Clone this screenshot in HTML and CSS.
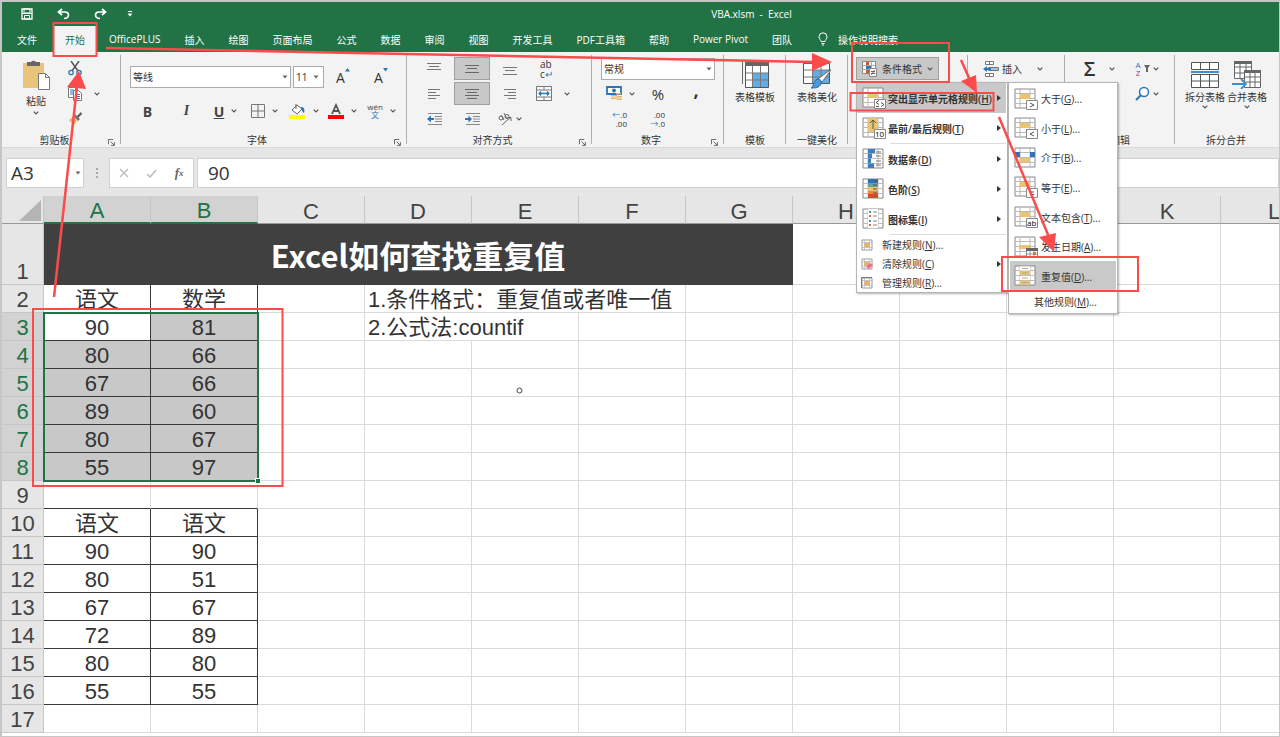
FILE: index.html
```html
<!DOCTYPE html>
<html lang="zh-CN">
<head>
    <meta charset="UTF-8">
    <meta name="viewport" content="width=device-width, initial-scale=1.0">
    <title>VBA.xlsm - Excel</title>
    <link rel="stylesheet" href="styles.css">
</head>
<body>
    <!-- shared icons -->
    <svg class="defs" aria-hidden="true">
        <symbol id="chev" viewBox="0 0 6 4"><path d="M.7.7 3 3 5.3.7" fill="none" stroke="#555" stroke-width="1.2"/></symbol>
        <symbol id="tri" viewBox="0 0 6 4"><path d="M.5.5h5L3 3.5z" fill="#666"/></symbol>
        <symbol id="launch" viewBox="0 0 8 8"><path d="M.5 6V.5H6M3 3l4 4M7.300 3.500v3.800H3.500" fill="none" stroke="#555"/></symbol>
        <symbol id="cells" viewBox="0 0 24 22"><path d="M1 1h20v19H1z" fill="#fff" stroke="#888"/><path d="M1 5.500h20M1 10.500h20M1 15.500h20M6 1v19M16 1v19" stroke="#bbb" fill="none"/></symbol>
        <symbol id="mark" viewBox="0 0 24 22"><use href="#cells"/><path d="M6 6h10v5H6z" fill="#eac46f"/></symbol>
        <symbol id="badge" viewBox="0 0 24 22"><path d="M12.500 12.500h11v9h-11z" fill="#fff" stroke="#888"/></symbol>
        <symbol id="small" viewBox="0 0 12 12"><path d="M1 1h10v10H1z" fill="#fff" stroke="#999"/><path d="M1 3.500h10M1 8.500h10M3.500 1v10M8.500 1v10" stroke="#c4c4c4"/><path d="M3.500 4h5v4h-5z" fill="#eab45f"/></symbol>
    </svg>

    <div class="window">
        <header class="top">
            <div class="titlebar">
                <div class="quick">
                    <button aria-label="保存"><svg width="12" height="12" viewBox="0 0 12 12"><path d="M1 1h10v10H1z" fill="none" stroke="#fff" stroke-width="1.300"/><path d="M3 1h6v4H3zM3.500 7.500h5V11h-5z" fill="none" stroke="#fff"/><path d="M1 5.500h10" stroke="#fff"/></svg></button>
                    <button aria-label="撤消"><svg width="13" height="12" viewBox="0 0 13 12"><path d="M5 1 1.500 4 5 7M2 4h6c2.500 0 3.500 1.500 3.500 3S10 10.500 7 10.500" fill="none" stroke="#fff" stroke-width="1.700"/></svg></button>
                    <button aria-label="恢复"><svg width="13" height="12" viewBox="0 0 13 12"><path d="m8 1 3.500 3L8 7M11 4H5C2.500 4 1.500 5.500 1.500 7S3 10.500 6 10.500" fill="none" stroke="#fff" stroke-width="1.700"/></svg></button>
                    <button class="more" aria-label="自定义"><svg width="6" height="6" viewBox="0 0 6 6"><path d="M1 .5h4" stroke="#fff"/><path d="M.5 2.500h5L3 5.500z" fill="#fff"/></svg></button>
                </div>
                <div class="doc-name">VBA.xlsm&nbsp; -&nbsp; Excel</div>
            </div>
            <nav class="tabs">
                <a href="#" class="file">文件</a>
                <a href="#" class="active">开始</a>
                <a href="#">OfficePLUS</a>
                <a href="#">插入</a>
                <a href="#">绘图</a>
                <a href="#">页面布局</a>
                <a href="#">公式</a>
                <a href="#">数据</a>
                <a href="#">审阅</a>
                <a href="#">视图</a>
                <a href="#">开发工具</a>
                <a href="#">PDF工具箱</a>
                <a href="#">帮助</a>
                <a href="#">Power Pivot</a>
                <a href="#">团队</a>
                <a href="#" class="tell"><svg width="10" height="14" viewBox="0 0 10 14"><path d="M3 9.500C3 8 1 7 1 4.800a4 4 0 0 1 8 0C9 7 7 8 7 9.500zM3.500 11.500h3M4 13h2" fill="none" stroke="#fff"/></svg>操作说明搜索</a>
            </nav>
        </header>

        <section class="ribbon">
            <div class="group clipboard">
                <div class="group-body">
                    <button class="big paste">
                        <svg width="28" height="32" viewBox="0 0 28 32"><path d="M1 4h21v25H1z" fill="#e9c37c"/><path d="M5 3h4a3 3 0 0 1 5 0h4v4H5z" fill="#666"/><path d="M16.500 14.500h7l4 4v12h-11z" fill="#fff" stroke="#777"/><path d="M23.500 14.500v4h4" fill="none" stroke="#777"/></svg>
                        <span>粘贴</span>
                        <svg class="chev"><use href="#chev"/></svg>
                    </button>
                    <div class="rows">
                        <button aria-label="剪切"><svg width="14" height="15" viewBox="0 0 14 15"><path d="M3 0l7 10M11 0 4 10" stroke="#555" stroke-width="1.500"/><circle cx="3" cy="11.500" r="2.200" fill="none" stroke="#2f75b5" stroke-width="1.300"/><circle cx="11" cy="11.500" r="2.200" fill="none" stroke="#2f75b5" stroke-width="1.300"/></svg></button>
                        <button class="drop" aria-label="复制"><svg width="14" height="14" viewBox="0 0 14 14"><path d="M.5.5h7v10h-7z" fill="#fff" stroke="#777"/><path d="M2 3h4M2 5h4M2 7h4" stroke="#2f75b5"/><path d="M5.500 3.500h5l3 3v7h-8z" fill="#fff" stroke="#777"/><path d="M7 7.500h5M7 9.500h5M7 11.500h5" stroke="#2f75b5"/></svg><svg class="chev"><use href="#chev"/></svg></button>
                        <button aria-label="格式刷"><svg width="14" height="13" viewBox="0 0 14 13"><path d="M1 8l4-3 4 4-3 4z" fill="#e9b55c"/><path d="m5 4 2-2 5 5-2 2z" fill="#777"/><path d="m9 4 4-4 1 2-4 4z" fill="#555"/></svg></button>
                    </div>
                </div>
                <div class="group-label">剪贴板<svg class="launch"><use href="#launch"/></svg></div>
            </div>

            <div class="group font">
                <div class="group-body">
                    <div class="font-row">
                        <div class="combo"><select class="font-name" aria-label="字体"><option>等线</option></select><svg class="chev"><use href="#tri"/></svg></div>
                        <div class="combo"><select class="font-size" aria-label="字号"><option>11</option></select><svg class="chev"><use href="#tri"/></svg></div>
                        <button class="cell" aria-label="增大字号"><span class="glyph">A</span><svg class="tip" width="5" height="4" viewBox="0 0 5 4"><path d="M0 3.500 2.500 0 5 3.500z" fill="#2f75b5"/></svg></button>
                        <button class="cell" aria-label="减小字号"><span class="glyph">A</span><svg class="tip" width="5" height="4" viewBox="0 0 5 4"><path d="M0 0h5L2.500 3.500z" fill="#2f75b5"/></svg></button>
                    </div>
                    <div class="font-row style-row">
                        <button class="cell"><b>B</b></button>
                        <button class="cell"><i>I</i></button>
                        <button class="cell drop"><u>U</u><svg class="chev"><use href="#chev"/></svg></button>
                        <button class="cell drop" aria-label="边框"><svg width="14" height="14" viewBox="0 0 14 14"><path d="M.5.5h13v13H.5zM7 .5v13M.5 7h13" fill="none" stroke="#777"/></svg><svg class="chev"><use href="#chev"/></svg></button>
                        <button class="cell drop" aria-label="填充颜色"><svg width="17" height="16" viewBox="0 0 17 16"><path d="m8 2 5 4-5 5-5-4z" fill="#fff" stroke="#666"/><path d="M7 6V1" stroke="#666"/><path d="M12 4c3 0 4 2 3 6-2-1-2-3-3-6z" fill="#2f75b5"/><path d="M0 12h16v4H0z" fill="#ff0"/></svg><svg class="chev"><use href="#chev"/></svg></button>
                        <button class="cell drop" aria-label="字体颜色"><svg width="16" height="16" viewBox="0 0 16 16"><path d="m4 11 4-9 4 9M5.500 8h5" fill="none" stroke="#555" stroke-width="1.800"/><path d="M0 12h16v4H0z" fill="#f00"/></svg><svg class="chev"><use href="#chev"/></svg></button>
                        <button class="cell drop"><span class="pinyin">wén<em>文</em></span><svg class="chev"><use href="#chev"/></svg></button>
                    </div>
                </div>
                <div class="group-label">字体<svg class="launch"><use href="#launch"/></svg></div>
            </div>

            <div class="group align">
                <div class="group-body icon-grid">
                    <button aria-label="顶端对齐"><svg width="14" height="12" viewBox="0 0 14 12"><path d="M0 .5h14M2 3.500h10M0 6.500h14" stroke="#777"/></svg></button>
                    <button class="on" aria-label="垂直居中"><svg width="14" height="10" viewBox="0 0 14 10"><path d="M0 1.500h14M2 4.500h10M0 8.500h14" stroke="#666"/></svg></button>
                    <button aria-label="底端对齐"><svg width="14" height="12" viewBox="0 0 14 12"><path d="M0 4.500h14M2 7.500h10M0 11.500h14" stroke="#777"/></svg></button>
                    <button class="drop" aria-label="自动换行"><span class="wrap-text"><span>ab</span><span>c<em>↵</em></span></span></button>
                    <button aria-label="左对齐"><svg width="12" height="10" viewBox="0 0 12 10"><path d="M0 .5h12M0 3.500h8M0 6.500h12M0 9.500h8" stroke="#777"/></svg></button>
                    <button class="on" aria-label="居中"><svg width="14" height="10" viewBox="0 0 14 10"><path d="M0 .5h14M2 3.500h10M0 6.500h14M2 9.500h10" stroke="#666"/></svg></button>
                    <button aria-label="右对齐"><svg width="12" height="10" viewBox="0 0 12 10"><path d="M0 .5h12M4 3.500h8M0 6.500h12M4 9.500h8" stroke="#777"/></svg></button>
                    <button class="drop" aria-label="合并后居中"><svg width="16" height="15" viewBox="0 0 16 15"><path d="M.5.500h15v14H.5z" fill="#fff" stroke="#777"/><path d="M.5 4h15M.5 11h15M8 .5V4M8 11v3.500" fill="none" stroke="#777"/><path d="M3 7.500h10M5 5.500l-2 2 2 2M11 5.500l2 2-2 2" fill="none" stroke="#2f75b5" stroke-width="1.300"/></svg><svg class="chev far"><use href="#chev"/></svg></button>
                    <button aria-label="减少缩进"><svg width="15" height="12" viewBox="0 0 15 12"><path d="M1 .5h14M8 3.500h7M8 6h7M8 8.500h7M1 11.500h14" stroke="#888"/><path d="M0 6l4-3.500V5h3v2H4v2.500z" fill="#2f75b5"/></svg></button>
                    <button aria-label="增加缩进"><svg width="15" height="12" viewBox="0 0 15 12"><path d="M1 .5h14M8 3.500h7M8 6h7M8 8.500h7M1 11.500h14" stroke="#888"/><path d="M7 6 3.500 2.500V5H0v2h3.500v2.500z" fill="#2f75b5"/></svg></button>
                    <button class="drop orient" aria-label="方向"><svg width="15" height="14" viewBox="0 0 15 14"><circle cx="3" cy="6" r="2" fill="none" stroke="#666"/><path d="m3 3 3 5M6 1l3 6" stroke="#666"/><circle cx="9" cy="4.500" r="2" fill="none" stroke="#666"/><path d="m4 13 9-8M9.500 5.500H13V9" fill="none" stroke="#666"/></svg><svg class="chev"><use href="#chev"/></svg></button>
                </div>
                <div class="group-label">对齐方式<svg class="launch"><use href="#launch"/></svg></div>
            </div>

            <div class="group number">
                <div class="group-body icon-grid">
                    <div class="combo"><select class="format" aria-label="数字格式"><option>常规</option></select><svg class="chev"><use href="#tri"/></svg></div>
                    <button class="drop" aria-label="会计数字格式"><svg width="16" height="15" viewBox="0 0 16 15"><path d="M1 1h14v7H1z" fill="#fff" stroke="#2f75b5" stroke-width="1.800"/><circle cx="8" cy="4.500" r="2" fill="#2f75b5"/><path d="M5 9h6v1.500H5zM5 11.500h6V13H5zM10 7h5v1.500h-5zM11 10h5v1.500h-5zM11 12.500h5V14h-5z" fill="#e9b55c"/></svg><svg class="chev"><use href="#chev"/></svg></button>
                    <button class="pct">%</button>
                    <button class="comma">,</button>
                    <button class="decimals"><span><em>←</em>.0</span><span>.00</span></button>
                    <button class="decimals"><span>.00</span><span><em>→</em>.0</span></button>
                </div>
                <div class="group-label">数字<svg class="launch"><use href="#launch"/></svg></div>
            </div>

            <div class="group plus">
                <div class="group-body">
                    <button class="big">
                        <svg width="28" height="28" viewBox="0 0 28 28"><path d="M1.500 1v22" stroke="#666"/><path d="M4.500 1.500h23v25h-23z" fill="#fff" stroke="#555"/><path d="M4 1h24v4H4z" fill="#666"/><path d="M12 12h15v14H12z" fill="#62ace6"/><path d="M5 12h22M5 19h22M11.500 5v21M19.500 5v21" stroke="#777" fill="none"/></svg>
                        <span>表格模板</span>
                    </button>
                </div>
                <div class="group-label">模板</div>
            </div>

            <div class="group plus">
                <div class="group-body">
                    <button class="big">
                        <svg width="28" height="28" viewBox="0 0 28 28"><path d="M.5 1.500h26v21H.5z" fill="#fff" stroke="#555"/><path d="M0 0h27v3H0z" fill="#666"/><path d="M10 9h16v13H10z" fill="#62ace6"/><path d="M1 9h25M1 16h25M9.500 3v19M18 3v19" stroke="#777" fill="none"/><path d="m28 9-9 12-4-3 12-9z" fill="#fff" stroke="#666"/><path d="M14 18c3 0 5 2 4 5-2 4-6 4-10 4 3-2 2-6 6-9z" fill="#4a98dc" stroke="#276ca8"/></svg>
                        <span>表格美化</span>
                    </button>
                </div>
                <div class="group-label">一键美化</div>
            </div>

            <div class="group styles">
                <div class="group-body">
                    <div class="dropdown">
                        <button class="cond">
                            <svg width="15" height="16" viewBox="0 0 15 16"><path d="M.5.500h13v12H.5z" fill="#fff" stroke="#888"/><path d="M.5 4.500h13M.5 8.500h13M9.500.5v12" stroke="#aaa"/><path d="M4 1h3v3H4zM4 9h5v3H4z" fill="#d9562b"/><path d="M4 5h5v3H4z" fill="#2f75b5"/><path d="M7.500 7.500h7v8h-7z" fill="#fff" stroke="#888"/><path d="M9 10.500h4M9 12.500h4M12.500 9l-3 5" stroke="#666"/></svg>
                            条件格式
                            <svg class="chev"><use href="#chev"/></svg>
                        </button>
                        <div class="menu main-menu">
                            <button class="item strong hover"><svg class="ico"><use href="#mark"/><use href="#badge"/><path d="m17 13.500-3 2 3 2M14 19.500h3M19 15.500l3 2-3 2" fill="none" stroke="#555"/></svg><span>突出显示单元格规则(<u>H</u>)</span><i class="arrow"></i></button>
                            <button class="item strong"><svg class="ico"><use href="#cells"/><path d="M6 1h10v14H6z" fill="#eac46f"/><path d="M11 12V3M8 6l3-3 3 3" fill="none" stroke="#555"/><use href="#badge"/><text x="13" y="20">10</text></svg><span>最前/最后规则(<u>T</u>)</span><i class="arrow"></i></button>
                            <hr>
                            <button class="item strong"><svg class="ico"><use href="#cells"/><path d="M6 1h7v4H6zM6 5.500h4v4.500H6zM6 10.500h3V15H6zM6 15.500h6V20H6z" fill="#3c7fc0"/><path d="M14 4h5M14 8h5M14 13h5M14 17h5" stroke="#777"/></svg><span>数据条(<u>D</u>)</span><i class="arrow"></i></button>
                            <button class="item strong"><svg class="ico"><use href="#cells"/><path d="M6 1h10v4H6z" fill="#2f75b5"/><path d="M6 5h10v4H6z" fill="#5fa59b"/><path d="M6 9h10v4H6z" fill="#eac46f"/><path d="M6 13h10v3H6z" fill="#e98b3e"/><path d="M6 16h10v4H6z" fill="#cf4f2c"/><path d="M11 3h4M11 7h4M11 11h4M11 15h4" stroke="#555"/></svg><span>色阶(<u>S</u>)</span><i class="arrow"></i></button>
                            <button class="item strong"><svg class="ico"><use href="#cells"/><path d="M6 1h10v19H6z" fill="#fff"/><path d="M7 3h2v2H7zM7 12h2v2H7z" fill="#35a08a"/><path d="M7 7h2v2H7zM7 16h2v2H7z" fill="#e36b3a"/><path d="M11 4h4M11 8h4M11 13h4M11 17h4" stroke="#888"/></svg><span>图标集(<u>I</u>)</span><i class="arrow"></i></button>
                            <hr>
                            <button class="item slim"><svg class="ico-s"><use href="#small"/></svg><span>新建规则(<u>N</u>)...</span></button>
                            <button class="item slim"><svg class="ico-s"><use href="#small"/><path d="m5 9 4-4 3 2-4 4z" fill="#e8718d"/></svg><span>清除规则(<u>C</u>)</span><i class="arrow"></i></button>
                            <button class="item slim"><svg class="ico-s"><use href="#small"/><path d="M.5 11V.5H11" fill="none" stroke="#777"/></svg><span>管理规则(<u>R</u>)...</span></button>

                            <div class="menu sub-menu">
                                <div class="rules">
                                    <button class="item"><svg class="ico"><use href="#mark"/><use href="#badge"/><path d="m16 15 4 2-4 2" fill="none" stroke="#555"/></svg><span>大于(<u>G</u>)...</span></button>
                                    <button class="item"><svg class="ico"><use href="#mark"/><use href="#badge"/><path d="m20 15-4 2 4 2" fill="none" stroke="#555"/></svg><span>小于(<u>L</u>)...</span></button>
                                    <button class="item"><svg class="ico"><use href="#cells"/><path d="M1 5h5v5H1zM16 5h5v5h-5z" fill="#2f75b5"/><path d="M6 11h10v4H6z" fill="#eac46f"/></svg><span>介于(<u>B</u>)...</span></button>
                                    <button class="item"><svg class="ico"><use href="#mark"/><use href="#badge"/><path d="M16 16h4M16 18.500h4" stroke="#555"/></svg><span>等于(<u>E</u>)...</span></button>
                                    <button class="item"><svg class="ico"><use href="#mark"/><use href="#badge"/><text x="13" y="20">ab</text></svg><span>文本包含(<u>T</u>)...</span></button>
                                    <button class="item"><svg class="ico"><use href="#cells"/><path d="M5 9h12v4H5z" fill="#eac46f"/><use href="#badge"/><path d="M12 12h12v3H12z" fill="#666"/><path d="M16 15v7M20 15v7M13 18h10" stroke="#999"/><path d="M19 16h3v3h-3z" fill="#e07b32"/></svg><span>发生日期(<u>A</u>)...</span></button>
                                    <button class="item hover"><svg class="ico"><use href="#cells"/><path d="M6 1.500h10v4H6zM6 11h10v4H6z" fill="#fff"/><path d="M6 6h10v4H6zM6 15.500h10v4H6z" fill="#eac46f"/><path d="M8 3.500h6M8 8h6M8 13h6M8 17.500h6" stroke="#aaa"/></svg><span>重复值(<u>D</u>)...</span></button>
                                </div>
                                <button class="item other"><span>其他规则(<u>M</u>)...</span></button>
                            </div>
                        </div>
                    </div>
                </div>
                <div class="group-label">样式</div>
            </div>

            <div class="group cells">
                <div class="group-body">
                    <button class="insert"><svg width="16" height="16" viewBox="0 0 16 16"><path d="M2.500.500h8v3h-8zM6.500.5v3M2.500 12.500h8v3h-8zM6.500 12.500v3" fill="#fff" stroke="#777"/><path d="M5.500 6.500h10v3h-10z" fill="#9dc3e6" stroke="#777"/><path d="M0 8l4-3v2h4v2H4v2z" fill="#2f75b5"/></svg><span>插入</span><svg class="chev"><use href="#chev"/></svg></button>
                </div>
                <div class="group-label">单元格</div>
            </div>

            <div class="group edit">
                <div class="group-body">
                    <button class="sum"><span>Σ</span><svg class="chev"><use href="#chev"/></svg></button>
                    <button class="drop"><span class="sort"><em>A</em>Z</span><svg width="6" height="7" viewBox="0 0 6 7"><path d="M0 0h6L4 3v4H2V3z" fill="#666"/></svg><svg class="chev"><use href="#chev"/></svg></button>
                    <button class="drop find" aria-label="查找和选择"><svg width="15" height="15" viewBox="0 0 15 15"><circle cx="9" cy="6" r="4.500" fill="#fff" stroke="#2f75b5" stroke-width="1.500"/><path d="m6 9-5 5" stroke="#2f75b5" stroke-width="2"/></svg><svg class="chev"><use href="#chev"/></svg></button>
                </div>
                <div class="group-label">编辑</div>
            </div>

            <div class="group split">
                <div class="group-body">
                    <button class="big">
                        <svg width="28" height="28" viewBox="0 0 28 28"><path d="M.5 1.500h27v7H.5zM9.500 1.500v7M18.500 1.500v7M.5 13.500h27v13H.5zM.5 20h27M9.500 13.500v13M18.500 13.500v13" fill="#fff" stroke="#555"/><path d="M0 11h28" stroke="#3f8fd0" stroke-width="2"/></svg>
                        <span>拆分表格</span>
                        <svg class="chev"><use href="#chev"/></svg>
                    </button>
                    <button class="big">
                        <svg width="30" height="28" viewBox="0 0 30 28"><path d="M2.500.500h17v17h-17zM2.500 6h17M2.500 12h17M8 3v14M14 3v14" fill="#fff" stroke="#666"/><path d="M2 0h18v3H2z" fill="#666"/><path d="M12.500 9.500h16v17h-16zM12.500 16h16M12.500 21h16M18 12v14M23 12v14" fill="#fff" stroke="#666"/><path d="M12 9h17v3H12z" fill="#666"/><path d="M0 23h14M9 18l5 5-5 5" fill="none" stroke="#3f8fd0" stroke-width="1.800"/></svg>
                        <span>合并表格</span>
                        <svg class="chev"><use href="#chev"/></svg>
                    </button>
                </div>
                <div class="group-label">拆分合并</div>
            </div>
        </section>

        <section class="formula-bar">
            <div class="combo name-box"><input type="text" value="A3" aria-label="名称框"><svg class="chev"><use href="#tri"/></svg></div>
            <svg class="dots" width="2" height="10" viewBox="0 0 2 10"><path d="M0 0h2v2H0zM0 4h2v2H0zM0 8h2v2H0z" fill="#aaa"/></svg>
            <div class="fx-box">
                <button aria-label="取消"><svg width="10" height="10" viewBox="0 0 10 10"><path d="m1 1 8 8M9 1 1 9" stroke="#bbb" stroke-width="1.300"/></svg></button>
                <button aria-label="输入"><svg width="11" height="9" viewBox="0 0 11 9"><path d="m1 5 3 3 6-7" fill="none" stroke="#bbb" stroke-width="1.600"/></svg></button>
                <button class="fx">f<small>x</small></button>
            </div>
            <input class="formula" type="text" value="90" aria-label="编辑栏">
        </section>

        <main class="sheet">
            <table>
                <colgroup id="cols"><col class="row-col"></colgroup>
                <thead><tr id="letters"><th class="corner"><svg width="22" height="22" viewBox="0 0 22 22"><path d="M22 0v21H0z" fill="#b4b4b4"/></svg></th></tr></thead>
                <tbody id="grid"></tbody>
            </table>
        </main>
    </div>

    <!-- tutorial marks drawn over the window -->
    <svg class="marks" width="1280" height="737" viewBox="0 0 1280 737" aria-hidden="true">
        <g fill="none" stroke="#fb4b4b" stroke-width="2">
            <path d="M53.500 23h43v33h-43zM852 43h97v39h-97zM850.500 93h143v17.500h-143zM1002 257h136v34h-136zM33 309h249.500v177H33z"/>
            <path d="M54 297 77 86M106 48l708 14M961 60l9 20M999 117l50 120" stroke-width="2.500"/>
        </g>
        <path d="m67 87 19 2-7-18zM812 53v18l20-9zM961 81l15-6 1 18zM1039 237l17-4-2 19z" fill="#fb4b4b"/>
        <circle cx="519.500" cy="390.500" r="2.500" fill="#fff" stroke="#444"/>
    </svg>

    <script src="script.js"></script>
</body>
</html>
```
FILE: styles.css
```css
* {
    box-sizing: border-box;
}
body {
    margin: 0;
    background: #c6c6c6;
    font-family: "Open Sans", "Noto Sans CJK SC", sans-serif;
    font-size: 10px;
    color: #333;
    overflow: hidden;
}
button, input, select {
    font: inherit;
    color: inherit;
    margin: 0;
    padding: 0;
    border: 0;
    border-radius: 0;
    background: none;
}
button {
    display: flex;
    align-items: center;
    justify-content: center;
    white-space: nowrap;
}
a {
    color: inherit;
    text-decoration: none;
}
em {
    font-style: normal;
    color: #2f75b5;
}
svg {
    flex: none;
}
.defs {
    position: absolute;
    width: 0;
    height: 0;
}
.chev {
    width: 6px;
    height: 4px;
}
.window {
    display: flex;
    flex-direction: column;
    height: 100vh;
    padding: 2px 1px 1px 2px;
}

/* title + tabs */
.top {
    background: #217346;
    color: #fff;
}
.titlebar {
    display: grid;
    grid-template-columns: 222px 1fr;
    align-items: center;
    height: 24px;
}
.quick {
    display: flex;
    padding-left: 6px;
}
.quick button {
    width: 37px;
}
.quick .more {
    width: 22px;
}
.doc-name {
    text-align: center;
}
.tabs {
    display: flex;
    height: 26px;
    padding-left: 3px;
}
.tabs a {
    display: flex;
    align-items: center;
    padding: 0 12px;
    white-space: nowrap;
}
.tabs .file {
    margin-right: 4px;
}
.tabs .active {
    background: #f3f3f3;
    color: #217346;
}
.tabs .tell {
    gap: 10px;
    padding-left: 14px;
}

/* ribbon */
.ribbon {
    display: flex;
    height: 96px;
    background: #f3f3f3;
    border-bottom: 1px solid #d8d8d8;
}
.group {
    position: relative;
    flex: none;
    padding-top: 4px;
}
.group::after {
    content: "";
    position: absolute;
    right: 0;
    top: 3px;
    bottom: 3px;
    width: 1px;
    background: #b0b0b0;
}
.group-body {
    display: flex;
    height: 75px;
}
.group-label {
    position: relative;
    padding-top: 1px;
    line-height: 16px;
    text-align: center;
}
.launch {
    position: absolute;
    right: 6px;
    top: 8px;
    width: 7px;
    height: 7px;
}
.big {
    flex-direction: column;
    justify-content: flex-start;
    gap: 1px;
    padding-top: 5px;
    line-height: 14px;
}
.drop {
    gap: 7px;
}
.combo {
    position: relative;
    display: flex;
}
.combo .chev {
    position: absolute;
    right: 3px;
    top: 9px;
}
.combo select {
    appearance: none;
    height: 22px;
    padding-left: 2px;
    background: #fff;
    border: 1px solid #ababab;
}
.clipboard {
    width: 119px;
}
.clipboard .group-body {
    padding-left: 17px;
}
.clipboard .group-label,
.font .group-label,
.align .group-label,
.number .group-label {
    padding-right: 14px;
}
.paste {
    width: 34px;
    padding-top: 3px;
    gap: 4px;
}
.paste span {
    line-height: 12px;
}
.rows {
    display: grid;
    grid-template-rows: repeat(3, 25px);
    padding-left: 15px;
}
.rows button {
    justify-content: flex-start;
}
.rows .drop {
    gap: 12px;
}
.font {
    width: 286px;
}
.font .group-body {
    flex-direction: column;
    padding: 4px 0 0 9px;
}
.font-row {
    display: flex;
    align-items: center;
    height: 34px;
}
.font-name {
    width: 161px;
    margin-right: 2px;
}
.font-size {
    width: 31px;
}
.font-row .combo .chev {
    right: 5px;
}
.cell {
    width: 38px;
}
.glyph {
    font-size: 14px;
}
.tip {
    align-self: flex-start;
}
.style-row {
    margin-left: -2px;
    font-size: 14px;
    color: #444;
}
.style-row .cell {
    width: 39px;
}
.style-row i {
    font-family: "Liberation Serif", serif;
    font-weight: bold;
}
.style-row u {
    font-weight: bold;
}
.pinyin {
    display: flex;
    flex-direction: column;
    align-items: center;
    font-size: 8px;
    line-height: 8px;
}
.icon-grid {
    display: grid;
    grid-template-rows: repeat(3, 25px);
    align-items: center;
}
.align {
    width: 185px;
}
.align .group-body {
    grid-template-columns: repeat(3, 38px) 50px;
    padding-left: 8px;
}
.icon-grid button {
    height: 23px;
    margin: 0 1px;
}
.icon-grid .on {
    background: #c8c8c8;
    border: 1px solid #a0a0a0;
}
.align .group-body .drop {
    justify-content: flex-start;
    padding-left: 6px;
}
.align .group-body .orient {
    gap: 3px;
}
.far {
    margin-left: 5px;
}
.wrap-text {
    display: flex;
    flex-direction: column;
    padding-left: 4px;
    line-height: 10px;
    text-align: left;
}
.number {
    width: 132px;
}
.number .group-body {
    grid-template-columns: repeat(3, 38px);
    padding-left: 9px;
}
.number .combo {
    grid-column: 1 / 4;
}
.format {
    width: 114px;
}
.pct {
    font-size: 15px;
}
.comma {
    font-size: 18px;
    font-weight: bold;
    line-height: 10px;
    padding-bottom: 8px;
}
.icon-grid .decimals {
    flex-direction: column;
    align-items: flex-end;
    font-size: 8px;
    line-height: 9px;
    padding-right: 11px;
}
.plus {
    width: 62px;
}
.plus .group-body {
    justify-content: center;
}
.styles {
    width: 120px;
}
.styles .group-body {
    padding: 1px 0 0 8px;
}
.dropdown {
    position: relative;
    height: 25px;
}
.cond {
    gap: 5px;
    width: 83px;
    height: 23px;
    background: #c8c8c8;
    border: 1px solid #a0a0a0;
}
.cells {
    width: 97px;
}
.cells .group-body {
    padding: 0 0 0 15px;
}
.insert {
    height: 25px;
    gap: 3px;
}
.insert .chev {
    margin-left: 12px;
}
.edit {
    width: 110px;
}
.edit .group-body {
    display: grid;
    grid-template-columns: 55px 40px;
    grid-template-rows: 25px 25px;
    padding-left: 7px;
}
.edit .drop {
    gap: 3px;
}
.find {
    grid-column: 2;
}
.sum {
    gap: 14px;
    font-size: 20px;
    font-weight: 600;
}
.sort {
    display: flex;
    flex-direction: column;
    font-size: 8px;
    line-height: 8px;
    color: #8a3ca0;
}
.split {
    flex: 1;
}
.split::after {
    display: none;
}
.split .group-body {
    justify-content: center;
    gap: 2px;
    padding-right: 2px;
}
.split .group-label {
    padding-right: 2px;
}

/* menus */
.menu {
    position: absolute;
    z-index: 5;
    background: #fff;
    border: 1px solid #b5b5b5;
    box-shadow: 1px 1px 2px rgba(0, 0, 0, 0.3);
}
.main-menu {
    left: 0;
    top: 25px;
    width: 152px;
    padding-right: 1px;
}
.main-menu hr {
    height: 1px;
    margin: 0 0 0 33px;
    border: 0;
    background: #dcdcdc;
}
.item {
    width: 100%;
    height: 30px;
    gap: 2px;
    padding-left: 5px;
    justify-content: flex-start;
}
.item.hover {
    background: #c9c9c9;
}
.strong {
    font-weight: 600;
}
.slim {
    height: 19px;
    gap: 9px;
    padding-left: 4px;
}
.ico {
    width: 24px;
    height: 22px;
    font-size: 8px;
    font-weight: normal;
}
.ico-s {
    width: 12px;
    height: 12px;
}
.arrow {
    margin: 0 5px 0 auto;
    border: 3px solid transparent;
    border-left: 4px solid #333;
    border-right: 0;
}
.sub-menu {
    left: 151px;
    top: -1px;
    width: 110px;
    padding: 1px;
}
.rules {
    display: grid;
    grid-auto-rows: 1fr;
    height: 207px;
}
.rules .item {
    height: auto;
    gap: 3px;
    padding-left: 4px;
}
.other {
    height: 21px;
    padding-left: 24px;
}

/* formula bar */
.formula-bar {
    display: flex;
    align-items: center;
    height: 48px;
    padding: 2px 0 0 4px;
    background: #e6e6e6;
    font-size: 19px;
}
.formula-bar input {
    height: 30px;
    background: #fff;
    border: 1px solid #d0d0d0;
}
.name-box input {
    width: 78px;
    padding-left: 4px;
}
.name-box .chev {
    top: 13px;
}
.dots {
    margin: 0 11px 0 12px;
}
.fx-box {
    display: flex;
    width: 85px;
    height: 30px;
    margin-right: 3px;
    background: #fff;
    border: 1px solid #d0d0d0;
}
.fx-box button {
    flex: 1;
}
.fx {
    font: italic bold 13px "Liberation Serif", serif;
    color: #666;
}
.fx small {
    font-size: 9px;
}
.formula-bar .formula {
    flex: 1;
    padding-left: 10px;
}

/* sheet */
.sheet {
    flex: 1;
    overflow: hidden;
    background: #fff;
    font-family: "Liberation Sans", "Noto Sans CJK SC", sans-serif;
    font-size: 22px;
    line-height: 25px;
}
table {
    table-layout: fixed;
    width: 1326px;
    border-spacing: 0;
}
.row-col {
    width: 42px;
}
th {
    padding: 2px 0 0;
    height: 28px;
    background: #e6e6e6;
    border-right: 1px solid #c6c6c6;
    border-bottom: 1px solid #c6c6c6;
    font-weight: normal;
    color: #444;
}
thead th {
    padding-top: 3px;
    line-height: 23px;
    border-bottom-color: #999;
}
th.corner {
    text-align: right;
    line-height: 0;
    padding-right: 2px;
}
th.picked {
    background: #d2d2d2;
    color: #217346;
}
thead .picked {
    border-bottom: 2px solid #217346;
}
td {
    height: 28px;
    padding: 2px 0 0 3px;
    border-right: 1px solid #dadada;
    border-bottom: 1px solid #dadada;
    white-space: nowrap;
}
.tall th {
    height: 61px;
    vertical-align: bottom;
}
td.banner {
    background: #404040;
    border-color: #404040;
    color: #fff;
    font-family: "Noto Sans CJK SC", sans-serif;
    font-size: 31px;
    font-weight: bold;
    text-align: center;
    padding: 0;
}
td.boxed {
    border-color: #3a3a3a;
    padding-left: 0;
    text-align: center;
}
.above {
    border-bottom-color: #3a3a3a;
}
.shade {
    background: #c8c8c8;
}
.start {
    position: relative;
}
.selection {
    position: absolute;
    left: -1px;
    top: -1px;
    width: 216px;
    height: 170px;
    border: 2px solid #217346;
}
.selection::after {
    content: "";
    position: absolute;
    right: -3px;
    bottom: -3px;
    width: 4px;
    height: 4px;
    background: #217346;
    outline: 1px solid #fff;
}
.marks {
    position: absolute;
    left: 0;
    top: 0;
    z-index: 10;
    pointer-events: none;
}
```
FILE: script.js
```js
const letters = 'ABCDEFGHIJKL'.split('');

const values = {
    2: ['语文', '数学'],
    3: [90, 81],
    4: [80, 66],
    5: [67, 66],
    6: [89, 60],
    7: [80, 67],
    8: [55, 97],
    10: ['语文', '语文'],
    11: [90, 90],
    12: [80, 51],
    13: [67, 67],
    14: [72, 89],
    15: [80, 80],
    16: [55, 55]
};

// text that runs over the cells to its right
const notes = {
    2: { text: '1.条件格式：重复值或者唯一值', span: 3 },
    3: { text: '2.公式法:countif', span: 2 }
};

function addCell(row, text, className, span) {
    const td = row.insertCell();
    td.textContent = text;
    td.className = className || '';
    td.colSpan = span || 1;
    return td;
}

letters.forEach(letter => {
    document.getElementById('cols').appendChild(document.createElement('col'));
    const th = document.createElement('th');
    th.textContent = letter;
    if (letter === 'A' || letter === 'B') th.className = 'picked';
    document.getElementById('letters').appendChild(th);
});

for (let n = 1; n <= 17; n++) {
    const row = document.getElementById('grid').insertRow();
    const selected = n >= 3 && n <= 8;
    const th = document.createElement('th');
    th.textContent = n;
    if (selected) th.className = 'picked';
    row.appendChild(th);

    let col = 0;
    if (n === 1) {
        row.className = 'tall';
        addCell(row, 'Excel如何查找重复值', 'banner', 7);
        col = 7;
    } else if (values[n]) {
        values[n].forEach((value, i) => {
            const shade = selected && !(n === 3 && i === 0);
            const td = addCell(row, value, shade ? 'boxed shade' : 'boxed');
            if (n === 3 && i === 0) {
                td.classList.add('start');
                const box = document.createElement('div');
                box.className = 'selection';
                td.appendChild(box);
            }
        });
        col = 2;
    } else if (n === 9) {
        addCell(row, '', 'above');
        addCell(row, '', 'above');
        col = 2;
    }

    while (col < letters.length) {
        if (col === 3 && notes[n]) {
            addCell(row, notes[n].text, '', notes[n].span);
            col += notes[n].span;
        } else {
            addCell(row, '');
            col++;
        }
    }
}
```
